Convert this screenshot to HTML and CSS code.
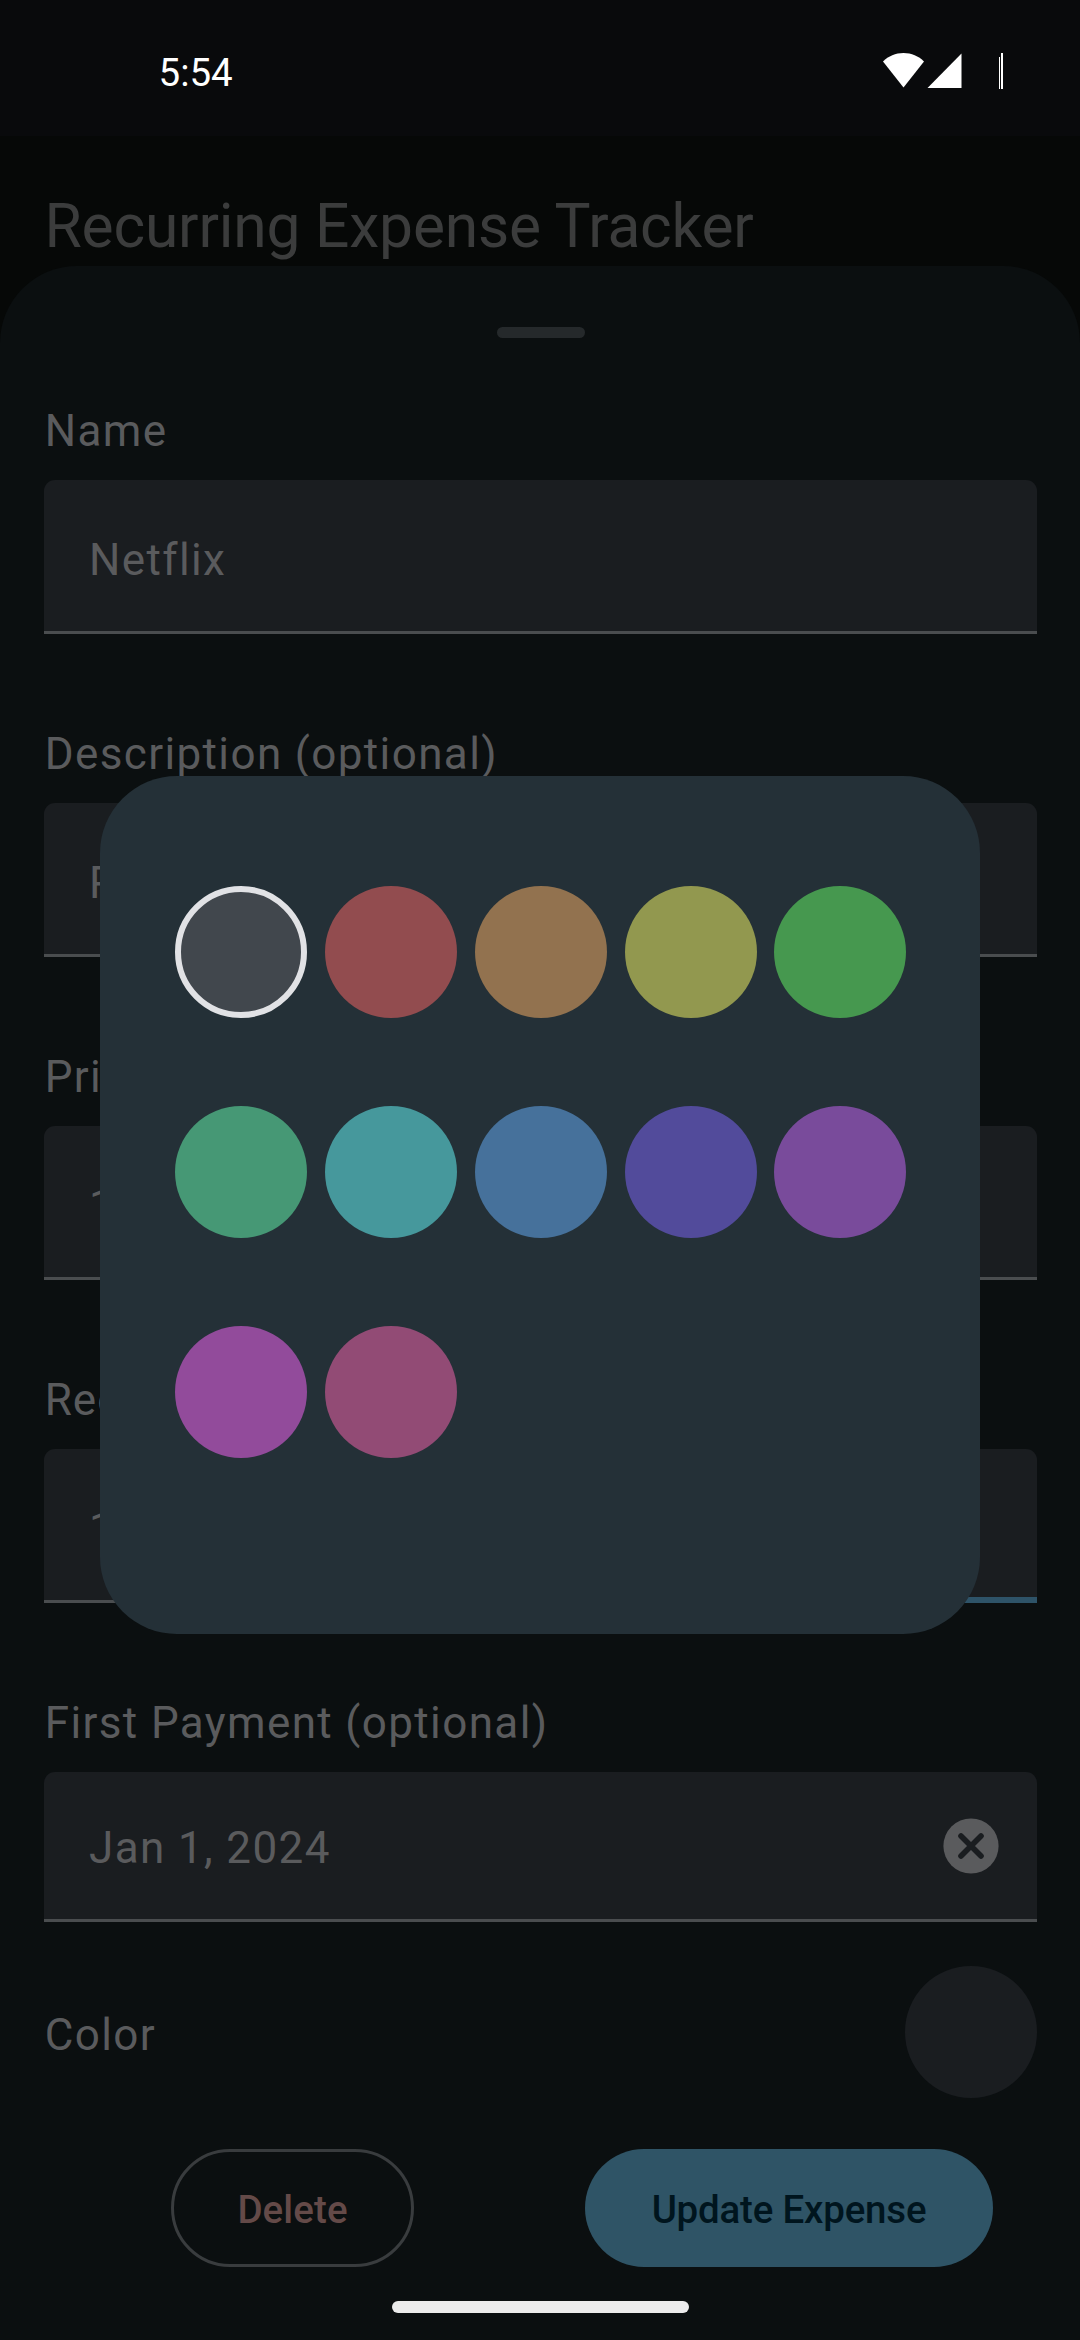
FILE: index.html
```html
<!DOCTYPE html>
<html lang="en">
<head>
<meta charset="utf-8">
<title>Recurring Expense Tracker</title>
<link rel="stylesheet" href="styles.css">
</head>
<body>
<div class="screen">
  <header class="status-bar">
    <span class="clock">5:54</span>
    <svg class="status-icons" width="122" height="40" viewBox="0 0 122 40" fill="#fff">
      <path d="M1 11.5C6.500 6 13.500 3 21.500 3S36.500 6 42 11.500L21.500 37.500Z"/>
      <path d="M79.500 3.500V38H45.500Z"/>
      <path d="M117 7h1v32h-1zM119 3h2v36h-2z"/>
    </svg>
  </header>
  <h1 class="app-title">Recurring Expense Tracker</h1>
  <main class="sheet">
    <div class="handle"></div>
    <section class="group">
      <label class="label">Name</label>
      <div class="field">Netflix</div>
    </section>
    <section class="group">
      <label class="label">Description (optional)</label>
      <div class="field">Premium</div>
    </section>
    <section class="group">
      <label class="label">Price</label>
      <div class="field">10</div>
    </section>
    <section class="group">
      <label class="label label-recurrence">Recurrence</label>
      <div class="field-row">
        <div class="field">1</div>
        <div class="field field-focused"></div>
      </div>
    </section>
    <section class="group group-date">
      <label class="label">First Payment (optional)</label>
      <div class="field field-date">
        <span>Jan 1, 2024</span>
        <svg class="clear" width="56" height="56" viewBox="0 0 56 56">
          <circle cx="28" cy="28" r="27.6" fill="#5a5b5d"/>
          <path d="M18 18 38 38M38 18 18 38" stroke="#1a1d20" stroke-width="5.600" stroke-linecap="round"/>
        </svg>
      </div>
    </section>
    <section class="color-row">
      <span class="label">Color</span>
      <span class="swatch swatch-current"></span>
    </section>
    <footer class="actions">
      <button class="button button-delete">Delete</button>
      <button class="button button-update">Update Expense</button>
    </footer>
    <div class="home-bar"></div>
  </main>
  <div class="dialog">
    <span class="swatch gray selected"></span>
    <span class="swatch red"></span>
    <span class="swatch orange"></span>
    <span class="swatch yellow"></span>
    <span class="swatch green"></span>
    <span class="swatch mint"></span>
    <span class="swatch cyan"></span>
    <span class="swatch blue"></span>
    <span class="swatch indigo"></span>
    <span class="swatch violet"></span>
    <span class="swatch magenta"></span>
    <span class="swatch pink"></span>
  </div>
</div>
</body>
</html>
```
FILE: styles.css
```css
* { box-sizing: border-box; }

body {
  margin: 0;
  background: #060807;
  font-family: Roboto, "Liberation Sans", sans-serif;
}

.screen {
  position: relative;
  display: flex;
  flex-direction: column;
  width: 1080px;
  height: 2340px;
  overflow: hidden;
}

.status-bar {
  display: flex;
  justify-content: space-between;
  align-items: flex-start;
  height: 136px;
  padding: 50px 76px 0 158.500px;
  background: #090a0c;
}

.clock {
  font-size: 38.500px;
  line-height: 46px;
  color: #fff;
}

.app-title {
  height: 130px;
  margin: 0;
  padding: 51px 44px 0 44.500px;
  font-size: 60.500px;
  font-weight: 400;
  line-height: 80px;
  letter-spacing: -0.190px;
  color: #3b3c3c;
}

.sheet {
  display: flex;
  flex: 1;
  flex-direction: column;
  padding: 61px 43px 0 44px;
  border-radius: 77px 77px 0 0;
  background: #0b0f10;
}

.handle {
  align-self: center;
  width: 88px;
  height: 11px;
  margin-bottom: 60px;
  border-radius: 6px;
  background: #25292b;
}

.group { margin-bottom: 87px; }
.group-date { margin-bottom: 44px; }

.label {
  display: block;
  padding-left: 0.700px;
  font-size: 44px;
  line-height: 66px;
  letter-spacing: 1.375px;
  color: #5a5b5d;
}

.label-recurrence { letter-spacing: 1px; }

.field {
  height: 154px;
  margin-top: 16px;
  padding: 47px 44px 0 45px;
  border-bottom: 3px solid #4a4d4f;
  border-radius: 11px 11px 0 0;
  background: #1a1d20;
  font-size: 44px;
  line-height: 66px;
  letter-spacing: 1.375px;
  color: #5a5b5d;
}

.field-row {
  display: grid;
  grid-template-columns: 1fr 1fr;
  gap: 44px;
}

.field-focused { border-bottom: 6px solid #2e5368; }

.field-date {
  display: flex;
  justify-content: space-between;
  align-items: flex-start;
  height: 150px;
  padding: 43px 38px 0 45px;
}

.clear { margin-top: 3px; }

.color-row {
  display: flex;
  justify-content: space-between;
  align-items: center;
}

.color-row .label { padding-top: 6px; }

.swatch {
  width: 132px;
  height: 132px;
  border-radius: 50%;
}

.swatch-current { background: #1a1d20; }

.actions {
  display: flex;
  justify-content: space-between;
  margin-top: 51px;
  padding: 0 44px 0 127px;
}

.button {
  height: 118px;
  padding: 2px 0 0;
  border: 0;
  border-radius: 59px;
  font-family: inherit;
  font-size: 38.500px;
  font-weight: 500;
}

.button-delete {
  width: 243px;
  border: 3px solid #393c3e;
  background: transparent;
  letter-spacing: 0.100px;
  color: #644a48;
}

.button-update {
  width: 408px;
  background: #2f5466;
  letter-spacing: -0.200px;
  color: #00151e;
}

.home-bar {
  align-self: center;
  width: 297px;
  height: 12px;
  margin-top: 34px;
  border-radius: 6px;
  background: #ececec;
}

/* Color picker over the sheet */
.dialog {
  position: absolute;
  top: 776px;
  left: 100px;
  display: grid;
  grid-template-columns: 150px 150px 150px 149px 132px;
  align-content: start;
  row-gap: 88px;
  width: 880px;
  height: 858px;
  padding: 110px 74px 0 75px;
  border-radius: 77px;
  background: #243037;
}

.selected { border: 6px solid #e1e2e5; }
.gray { background: #41474d; }
.red { background: #924c4f; }
.orange { background: #92724f; }
.yellow { background: #92984f; }
.green { background: #46984f; }
.mint { background: #469875; }
.cyan { background: #46989c; }
.blue { background: #46719b; }
.indigo { background: #524b9b; }
.violet { background: #794b9b; }
.magenta { background: #924b9b; }
.pink { background: #924b75; }
```
